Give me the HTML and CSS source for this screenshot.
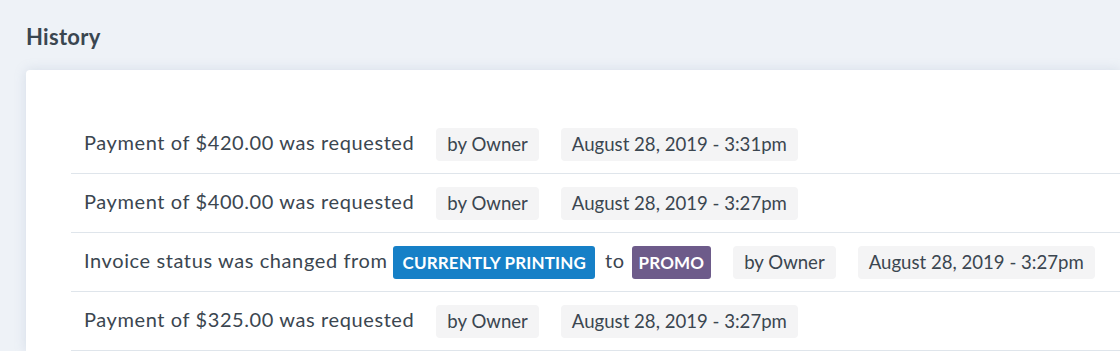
FILE: index.html
```html
<!DOCTYPE html>
<html lang="en">
<head>
  <meta charset="UTF-8" />
  <title>History</title>
  <link rel="stylesheet" href="styles.css">
</head>
<body>

<!-- history panel -->
<div class="section">
  <h2 class="section-title">History</h2>
  <div class="card">
    <ul class="history">
      <li class="entry">
        <span class="msg">Payment of $420.00 was requested</span>
        <span class="chip">by Owner</span>
        <span class="chip">August 28, 2019 - 3:31pm</span>
      </li>
      <li class="entry">
        <span class="msg">Payment of $400.00 was requested</span>
        <span class="chip">by Owner</span>
        <span class="chip">August 28, 2019 - 3:27pm</span>
      </li>
      <li class="entry">
        <span class="msg">Invoice status was changed from <span class="badge badge-blue">CURRENTLY PRINTING</span> to <span class="badge badge-purple">PROMO</span></span>
        <span class="chip">by Owner</span>
        <span class="chip">August 28, 2019 - 3:27pm</span>
      </li>
      <li class="entry">
        <span class="msg">Payment of $325.00 was requested</span>
        <span class="chip">by Owner</span>
        <span class="chip">August 28, 2019 - 3:27pm</span>
      </li>
    </ul>
  </div>
</div>

</body>
</html>
```

FILE: styles.css
```css
body {
  font-family: Lato, "Open Sans", sans-serif;
  background: #eef2f7;
  color: #3b4650;
  margin: 0;
  overflow: hidden;
}
.section {
  padding: 24px 0 0 26px;
}
.section-title {
  font-size: 22px;
  font-weight: 700;
  letter-spacing: 0.3px;
  color: #3a4650;
  margin: 0 0 20px;
  line-height: 26px;
}
.card {
  background: white;
  border-radius: 4px 0 0 0;
  box-shadow: 0 0 12px rgba(140, 160, 190, 0.25);
  padding: 45px 0 0 45px;
}
.history {
  list-style: none;
  margin: 0;
  padding: 0;
}
.entry {
  display: flex;
  align-items: center;
  gap: 22px;
  height: 58px;
  padding-left: 13px;
  border-bottom: 1px solid #dfe5eb;
  font-size: 20px;
}
.msg {
  display: flex;
  align-items: center;
  white-space: nowrap;
  letter-spacing: 0.6px;
  margin-top: -4px;
}
.chip {
  background: #f4f4f5;
  border-radius: 4px;
  padding: 0 11px;
  font-size: 18.6px;
  line-height: 33px;
  white-space: nowrap;
}
.badge {
  color: white;
  font-weight: 700;
  font-size: 17px;
  letter-spacing: 0.15px;
  line-height: 33px;
  padding: 0 9px;
  border-radius: 3px;
  margin: 4px 10px 0 6px;
}
.badge-blue {
  background: #1680c7;
}
.badge-purple {
  background: #6d5b8a;
  padding: 0 7px;
  margin-left: 7px;
  margin-right: 0;
}
```
